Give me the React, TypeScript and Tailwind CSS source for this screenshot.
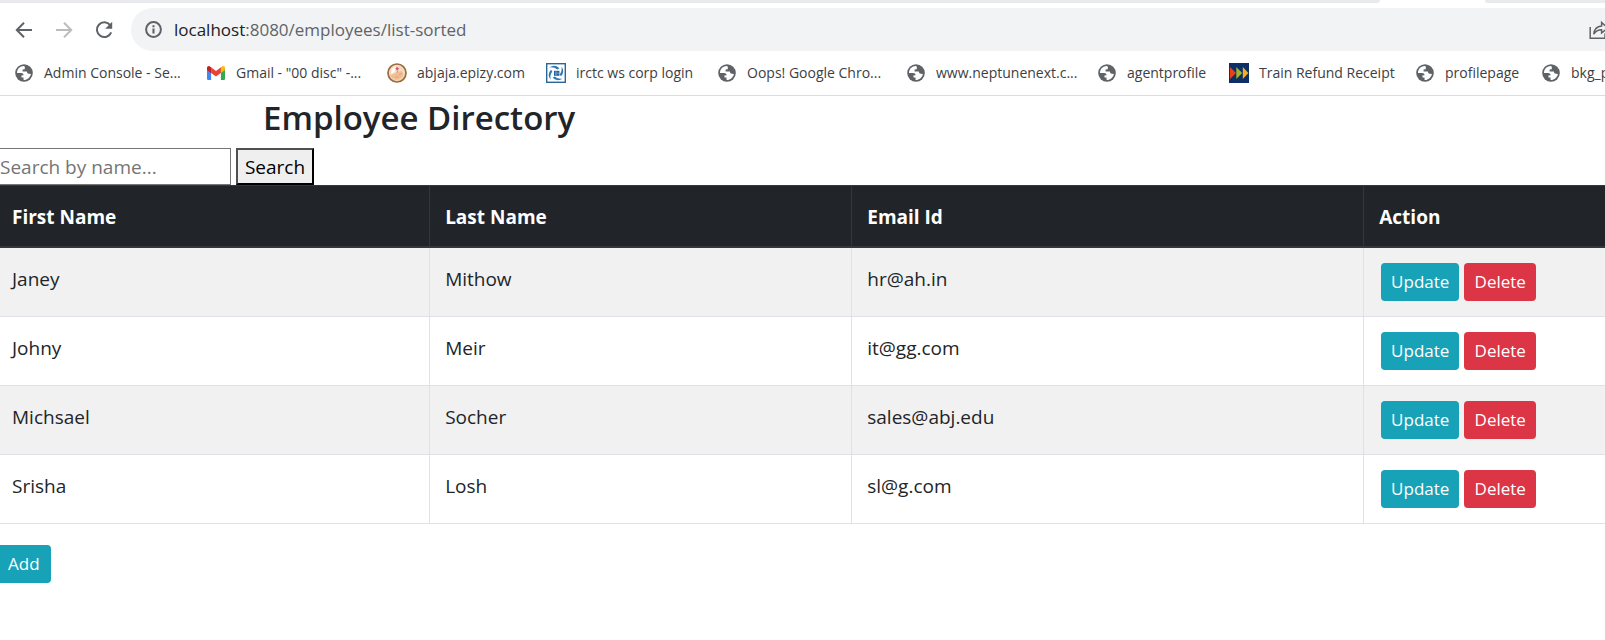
import type { ReactNode } from "react";

function GlobeIcon() {
  return (
    <svg viewBox="0 0 18 18" className="size-[18px]" aria-hidden="true">
      <circle cx="9" cy="9" r="8.8" fill="#5f6368" />
      <path
        d="M9.3 2.1 C5 1.9 2 5.3 2 8.9 L6.2 9 C8 9.1 8.6 10 8.5 11.2 L6.4 11.4 L6.5 13.4 L8.5 13.5 L8.6 15.9 C12.2 16 15.4 13.3 15.9 9.9 L13.9 9.8 C12.4 9.7 11.9 8.8 11.9 7.6 L7.6 7.5 L7.6 5.4 L9.7 5.2 L9.9 3.4 Z"
        fill="#fff"
      />
    </svg>
  );
}

function GmailIcon() {
  return (
    <svg viewBox="0 0 18 14" className="h-[14px] w-[18px]" aria-hidden="true">
      <path d="M0 3 L4.1 6 V14 H1.3 Q0 14 0 12.7 Z" fill="#4285f4" />
      <path d="M18 3 L13.9 6 V14 H16.7 Q18 14 18 12.7 Z" fill="#34a853" />
      <path d="M13.9 1.3 L15.2 .4 C16.4 -.4 18 .4 18 2 V4 L13.9 7 Z" fill="#fbbc04" />
      <path d="M4.1 1.3 L9 5 L13.9 1.3 V7 L9 10.6 L4.1 7 Z" fill="#ea4335" />
      <path d="M0 2 C0 .4 1.6 -.4 2.8 .4 L4.1 1.3 V7 L0 4 Z" fill="#c5221f" />
    </svg>
  );
}

function SealIcon() {
  return (
    <svg viewBox="0 0 20 20" className="size-5" aria-hidden="true">
      <circle cx="10" cy="10" r="9" fill="#f3d9bd" stroke="#9c6a3c" strokeWidth="1.7" />
      <path d="M3 12 Q7 11 9 9.5 L14 8 Q17 9 16 13 Q13 17 9 17 Q5 16 3 12Z" fill="#f2bd94" />
      <path d="M4.5 6.5 Q7 3 9 3.5 L8 9 L4 11Z" fill="#fffaf2" />
      <path d="M8.4 5.5 L10 4 L12 5.5 L10.3 7.6 Z" fill="#d6498c" />
      <path d="M10.3 7.5 V9.6" stroke="#7fae6a" strokeWidth=".9" />
      <path d="M12 12 L15 10 M8 14 L12 14" stroke="#e2a070" strokeWidth="1" />
    </svg>
  );
}

function RailIcon() {
  return (
    <svg viewBox="0 0 20 20" className="size-5" aria-hidden="true">
      <rect x=".7" y=".7" width="18.6" height="18.6" fill="#fff" stroke="#2c6699" strokeWidth="1.4" />
      <path d="M3.2 4.6 Q8.5 .8 13.4 5.2 L11.4 6.6 Q7.6 3.6 3.2 4.6Z" fill="#2d78b3" />
      <path d="M15.4 3.4 Q19.4 8.4 15 13.2 L13.6 11.4 Q16.4 7.8 15.4 3.4Z" fill="#2d78b3" />
      <path d="M16.8 15.4 Q11.5 19.2 6.6 14.8 L8.6 13.4 Q12.4 16.4 16.8 15.4Z" fill="#2d78b3" />
      <path d="M4.6 16.8 Q.6 11.6 5 6.8 L6.4 8.6 Q3.6 12.2 4.6 16.8Z" fill="#2d78b3" />
      <rect x="8" y="7.8" width="5.4" height="5" fill="#24609a" />
      <path d="M10 8.4 V12.2 M11.4 10.2 H12.8" stroke="#b8d4ea" strokeWidth=".8" />
    </svg>
  );
}

function ArrowsIcon() {
  return (
    <svg viewBox="0 0 20 20" className="size-5" aria-hidden="true">
      <rect width="20" height="20" fill="#0d2f66" />
      <path d="M1 4 L7 10 L1 16 Z" fill="#e8421c" />
      <path d="M7.3 4 L13.2 10 L7.3 16 Z" fill="#9fb52a" />
      <path d="M13.8 4 L19.4 10 L13.8 16 Z" fill="#f6b01e" />
    </svg>
  );
}

const bookmarks: { label: string; icon: ReactNode; width: string }[] = [
  { label: "Admin Console - Se...", icon: <GlobeIcon />, width: "w-[192px]" },
  { label: 'Gmail - "00 disc" -...', icon: <GmailIcon />, width: "w-[181px]" },
  { label: "abjaja.epizy.com", icon: <SealIcon />, width: "w-[159px]" },
  { label: "irctc ws corp login", icon: <RailIcon />, width: "w-[171px]" },
  { label: "Oops! Google Chro...", icon: <GlobeIcon />, width: "w-[189px]" },
  { label: "www.neptunenext.c...", icon: <GlobeIcon />, width: "w-[191px]" },
  { label: "agentprofile", icon: <GlobeIcon />, width: "w-[132px]" },
  { label: "Train Refund Receipt", icon: <ArrowsIcon />, width: "w-[186px]" },
  { label: "profilepage", icon: <GlobeIcon />, width: "w-[126px]" },
  { label: "bkg_p", icon: <GlobeIcon />, width: "w-[126px]" },
];

const employees = [
  { first: "Janey", last: "Mithow", email: "hr@ah.in" },
  { first: "Johny", last: "Meir", email: "it@gg.com" },
  { first: "Michsael", last: "Socher", email: "sales@abj.edu" },
  { first: "Srisha", last: "Losh", email: "sl@g.com" },
];

function Browser() {
  return (
    <header className="overflow-hidden border-b border-[#dadce0] bg-white">
      <div className="flex h-[3px] justify-between">
        <div className="w-[86%] rounded-br-[8px] bg-[#e8eaed]" />
        <div className="w-[7.5%] rounded-bl-[8px] bg-[#e8eaed]" />
      </div>
      <div className="flex h-[53px] items-center py-[5px]">
        <nav className="flex w-[131px] shrink-0 items-center gap-5 pl-[14px]" aria-label="History">
          <button type="button" aria-label="Back" className="size-5">
            <svg viewBox="0 0 20 20" className="size-5" fill="none" stroke="#5f6368" strokeWidth="2">
              <path d="M18 10 H3 M10 2.8 L2.8 10 L10 17.2" />
            </svg>
          </button>
          <button type="button" aria-label="Forward" className="size-5">
            <svg viewBox="0 0 20 20" className="size-5" fill="none" stroke="#babcbe" strokeWidth="2">
              <path d="M2 10 H17 M10 2.8 L17.2 10 L10 17.2" />
            </svg>
          </button>
          <button type="button" aria-label="Reload" className="size-5">
            <svg viewBox="0 0 20 20" className="size-5" fill="none">
              <path d="M16.2 5.2 A7.4 7.4 0 1 0 17.2 12.4" stroke="#5f6368" strokeWidth="2" />
              <path d="M18.2 1.8 V8.8 H11.2 Z" fill="#5f6368" />
            </svg>
          </button>
        </nav>
        <div className="flex h-[43px] min-w-0 flex-1 items-center justify-between overflow-hidden rounded-l-full bg-[#f1f3f4] pl-[14px]">
          <div className="flex items-center gap-3">
            <svg viewBox="0 0 17 17" className="size-[17px]" fill="none" aria-hidden="true">
              <circle cx="8.5" cy="8.5" r="7.4" stroke="#5f6368" strokeWidth="2" />
              <path d="M8.5 7.5 V12.6 M8.5 4.2 V6.2" stroke="#5f6368" strokeWidth="2.1" />
            </svg>
            <span className="text-[17px] leading-6 text-[#5f6368]">
              <span className="text-[#202124]">localhost</span>:8080/employees/list-sorted
            </span>
          </div>
          <button type="button" aria-label="Share" className="w-4 overflow-hidden">
            <svg viewBox="0 0 20 20" className="size-5 max-w-none" fill="none" stroke="#5f6368" strokeWidth="1.5">
              <path d="M1.2 7 V18.2 H16 V13.5" />
              <path d="M4.8 14.2 C5.2 9 8 6.4 12.6 6 V2.4 L18.6 8 L12.6 13 V9.8 C9 9.8 6.6 11.2 4.8 14.2 Z" />
            </svg>
          </button>
        </div>
      </div>
      <nav className="flex h-[39px] items-center pb-[5px] pl-[14px]" aria-label="Bookmarks">
        {bookmarks.map((b) => (
          <a
            key={b.label}
            href="#"
            className={`flex shrink-0 items-center gap-[10px] text-[14px] leading-5 whitespace-nowrap text-[#3c4043] ${b.width}`}
          >
            <span className="flex size-5 shrink-0 items-center justify-center">{b.icon}</span>
            {b.label}
          </a>
        ))}
      </nav>
    </header>
  );
}

export default function App() {
  return (
    <div className="overflow-hidden bg-white font-['Open_Sans',sans-serif] text-[#212529]">
      <Browser />
      <main>
        <h2 className="pt-[2px] pb-[10px] pl-[263px] text-[33px] leading-10 font-semibold">Employee Directory</h2>
        <form className="flex h-[37px] items-stretch gap-[5px]" onSubmit={(e) => e.preventDefault()}>
          <input
            type="text"
            aria-label="Search by name"
            placeholder="Search by name..."
            className="w-[231px] border border-l-0 border-[#767676] pt-px text-[19px] placeholder:text-[#757575]"
          />
          <button
            type="submit"
            className="w-[78px] border-2 border-t-[#505050] border-r-black border-b-black border-l-[#505050] bg-[#efefef] text-[19px] leading-7 text-black"
          >
            Search
          </button>
        </form>
        <table className="w-full table-fixed border-separate border-spacing-0 text-left text-[19px] leading-[30px]">
          <colgroup>
            <col className="w-[26.8%]" />
            <col className="w-[26.3%]" />
            <col className="w-[31.9%]" />
            <col className="w-[15%]" />
          </colgroup>
          <thead className="bg-[#212529] text-white">
            <tr className="h-[63px]">
              {["First Name", "Last Name", "Email Id", "Action"].map((h) => (
                <th
                  key={h}
                  className="border-t border-r border-b-2 border-[#32383e] px-[15px] pt-[2px] font-bold first:pl-3 last:border-r-0"
                >
                  {h}
                </th>
              ))}
            </tr>
          </thead>
          <tbody>
            {employees.map((e) => (
              <tr key={e.first} className="h-[69px] align-top odd:bg-[#f1f1f1]">
                <td className="border-r border-b border-[#dee2e6] pt-4 pr-[15px] pl-3">{e.first}</td>
                <td className="border-r border-b border-[#dee2e6] px-[15px] pt-4">{e.last}</td>
                <td className="border-r border-b border-[#dee2e6] px-[15px] pt-4">{e.email}</td>
                <td className="border-b border-[#dee2e6] px-[17px] pt-[15px]">
                  <div className="flex gap-[5px] text-[17px] leading-[38px] text-white">
                    <a href="#" className="w-[78px] rounded-[4px] bg-[#17a2b8] text-center">
                      Update
                    </a>
                    <a href="#" className="w-[72px] rounded-[4px] bg-[#dc3545] text-center">
                      Delete
                    </a>
                  </div>
                </td>
              </tr>
            ))}
          </tbody>
        </table>
        <a
          href="#"
          className="mt-[21px] inline-block w-[51px] rounded-r-[4px] bg-[#17a2b8] pl-2 text-[17px] leading-[38px] text-white"
        >
          Add
        </a>
      </main>
    </div>
  );
}
